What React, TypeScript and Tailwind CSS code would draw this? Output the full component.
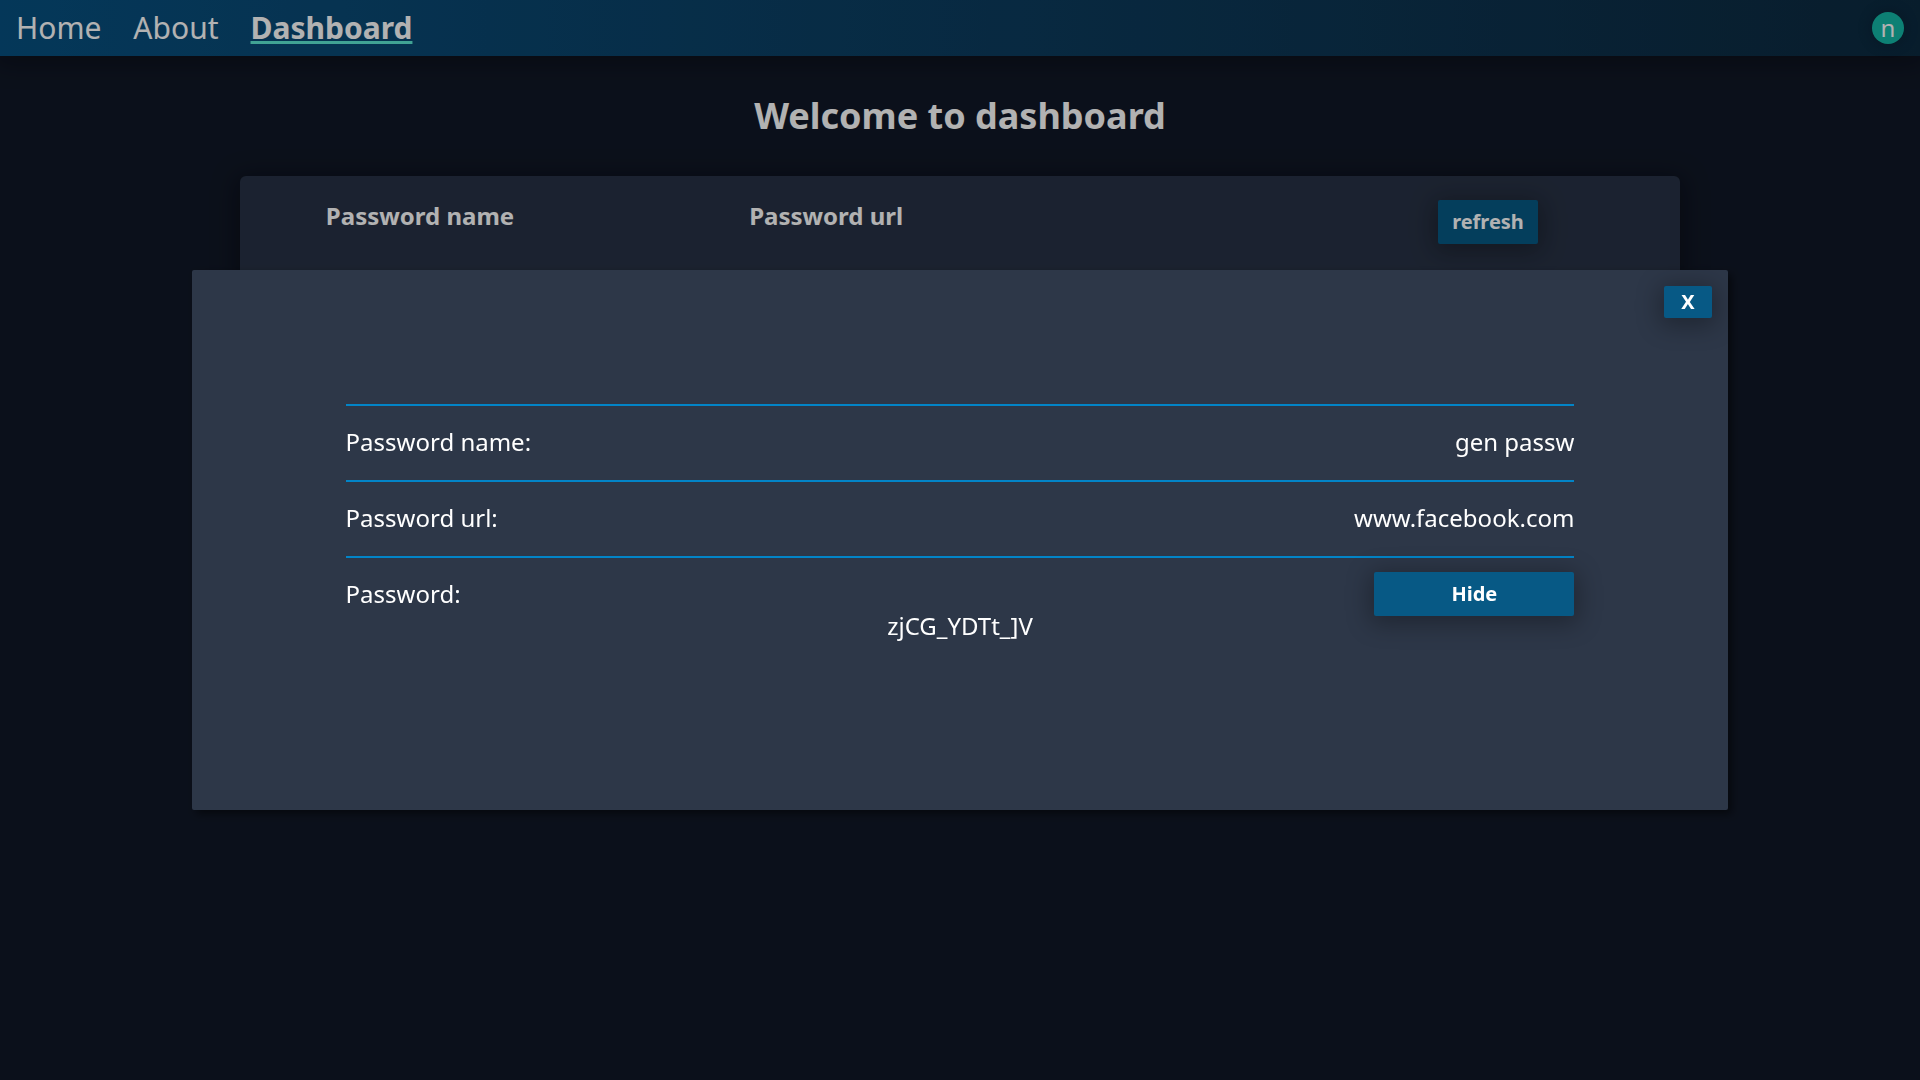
const button =
  "rounded-xs bg-[#075985] text-xl font-bold text-white shadow-[0_4px_24px_4px_rgba(0,0,0,0.3)]";

function Navbar() {
  return (
    <nav className="flex h-14 items-center justify-between bg-linear-to-r from-[#075080] to-[#0c2a40] px-4 text-3xl shadow-[0_4px_24px_4px_rgba(0,0,0,0.3)]">
      <div className="flex items-center gap-8">
        <a href="#home">Home</a>
        <a href="#about">About</a>
        <a
          href="#dashboard"
          aria-current="page"
          className="font-bold underline decoration-[#5eead4] decoration-3 underline-offset-2"
        >
          Dashboard
        </a>
      </div>
      <button
        type="button"
        aria-label="Account n"
        className="flex size-8 items-center justify-center rounded-full bg-[#14b8a6] text-2xl shadow-[0_0_16px_rgba(0,0,0,0.2)]"
      >
        n
      </button>
    </nav>
  );
}

function PasswordTable() {
  return (
    <section className="mx-auto mt-10 w-3/4 rounded-md bg-[#283245] pt-6 pb-20 shadow-[0_4px_24px_4px_rgba(0,0,0,0.35)]">
      <table className="w-full table-fixed text-2xl">
        <thead>
          <tr className="align-top">
            <th className="w-1/4 font-bold">Password name</th>
            <th className="w-[31%] pl-1.5 font-bold">Password url</th>
            <th className="pr-32">
              <div className="flex justify-end pr-3.5">
                <button type="button" className={button + " h-11 w-[100px]"}>
                  refresh
                </button>
              </div>
            </th>
          </tr>
        </thead>
      </table>
    </section>
  );
}

function DetailRow({ label, value }: { label: string; value: string }) {
  return (
    <div className="flex h-[76px] items-center justify-between border-t-2 border-[#0284c7] pb-0.5">
      <dt>{label}</dt>
      <dd>{value}</dd>
    </div>
  );
}

function PasswordDialog() {
  return (
    <div className="fixed inset-0 flex items-center justify-center bg-black/30">
      <div
        role="dialog"
        aria-label="Password details"
        className="flex h-1/2 w-4/5 flex-col rounded-xs bg-[#2d3748] shadow-[4px_4px_8px_rgba(0,0,0,0.5)]"
      >
        <div className="flex justify-end p-4">
          <button type="button" aria-label="Close" className={button + " h-8 w-12"}>
            X
          </button>
        </div>
        <dl className="mx-auto mt-[70px] w-4/5 text-2xl">
          <DetailRow label="Password name:" value="gen passw" />
          <DetailRow label="Password url:" value="www.facebook.com" />
          <div className="border-t-2 border-[#0284c7] pt-3.5">
            <dt className="flex items-center justify-between">
              Password:
              <button type="button" className={button + " h-11 w-[200px]"}>
                Hide
              </button>
            </dt>
            <dd className="-mt-1.5 text-center">zjCG_YDTt_]V</dd>
          </div>
        </dl>
      </div>
    </div>
  );
}

export default function App() {
  return (
    <div className="min-h-screen bg-[#111827] font-['Noto_Sans',sans-serif] text-white">
      <Navbar />
      <main>
        <h1 className="mt-10 text-center text-4xl font-bold">Welcome to dashboard</h1>
        <PasswordTable />
      </main>
      <PasswordDialog />
    </div>
  );
}
